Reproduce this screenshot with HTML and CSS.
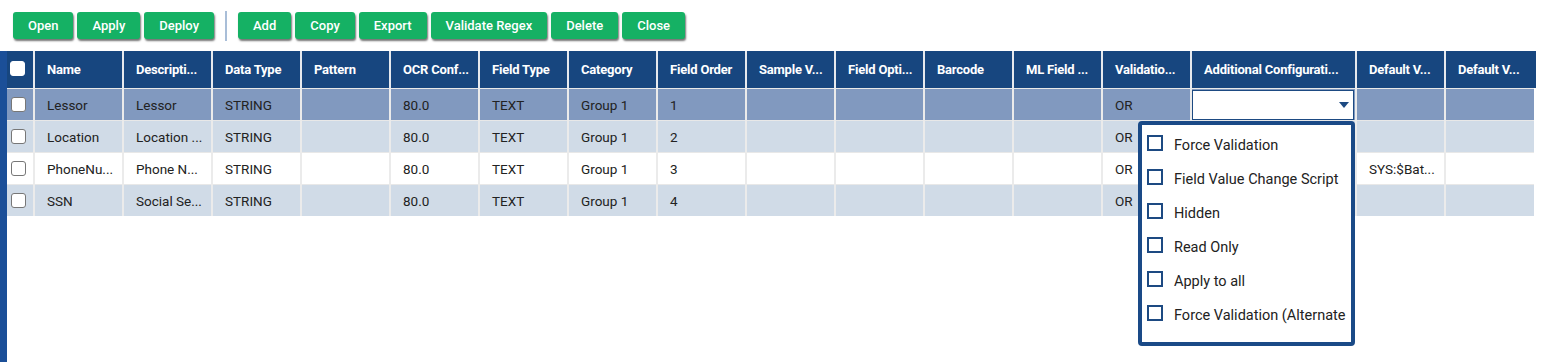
FILE: index.html
```html
<!DOCTYPE html>
<html lang="en">
<head>
    <meta charset="utf-8">
    <title>Index Fields</title>
    <link rel="stylesheet" href="styles.css">
</head>
<body>

<div class="toolbar">
    <button class="btn">Open</button>
    <button class="btn">Apply</button>
    <button class="btn">Deploy</button>
    <span class="sep"></span>
    <button class="btn">Add</button>
    <button class="btn">Copy</button>
    <button class="btn">Export</button>
    <button class="btn">Validate Regex</button>
    <button class="btn">Delete</button>
    <button class="btn">Close</button>
</div>

<div class="grid-wrap">
    <table class="grid">
        <colgroup>
            <col class="c-chk">
            <col class="c-std"><col class="c-std"><col class="c-std"><col class="c-std">
            <col class="c-std"><col class="c-std"><col class="c-std"><col class="c-std">
            <col class="c-std"><col class="c-std"><col class="c-std"><col class="c-std">
            <col class="c-std">
            <col class="c-wide">
            <col class="c-std"><col class="c-std">
        </colgroup>
        <thead>
            <tr>
                <th><span class="chk head"></span></th>
                <th>Name</th>
                <th>Descripti...</th>
                <th>Data Type</th>
                <th>Pattern</th>
                <th>OCR Conf...</th>
                <th>Field Type</th>
                <th>Category</th>
                <th>Field Order</th>
                <th>Sample V...</th>
                <th>Field Opti...</th>
                <th>Barcode</th>
                <th>ML Field ...</th>
                <th>Validatio...</th>
                <th>Additional Configurati...</th>
                <th>Default V...</th>
                <th>Default V...</th>
            </tr>
        </thead>
        <tbody>
            <tr class="selected">
                <td><span class="chk"></span></td>
                <td>Lessor</td>
                <td>Lessor</td>
                <td>STRING</td>
                <td></td>
                <td>80.0</td>
                <td>TEXT</td>
                <td>Group 1</td>
                <td>1</td>
                <td></td><td></td><td></td><td></td>
                <td>OR</td>
                <td class="edit">
                    <div class="select">
                        <span class="caret"></span>
                    </div>
                </td>
                <td></td><td></td>
            </tr>
            <tr class="alt">
                <td><span class="chk"></span></td>
                <td>Location</td>
                <td>Location ...</td>
                <td>STRING</td>
                <td></td>
                <td>80.0</td>
                <td>TEXT</td>
                <td>Group 1</td>
                <td>2</td>
                <td></td><td></td><td></td><td></td>
                <td>OR</td>
                <td></td><td></td><td></td>
            </tr>
            <tr>
                <td><span class="chk"></span></td>
                <td>PhoneNu...</td>
                <td>Phone N...</td>
                <td>STRING</td>
                <td></td>
                <td>80.0</td>
                <td>TEXT</td>
                <td>Group 1</td>
                <td>3</td>
                <td></td><td></td><td></td><td></td>
                <td>OR</td>
                <td></td>
                <td>SYS:$Bat...</td>
                <td></td>
            </tr>
            <tr class="alt">
                <td><span class="chk"></span></td>
                <td>SSN</td>
                <td>Social Se...</td>
                <td>STRING</td>
                <td></td>
                <td>80.0</td>
                <td>TEXT</td>
                <td>Group 1</td>
                <td>4</td>
                <td></td><td></td><td></td><td></td>
                <td>OR</td>
                <td></td><td></td><td></td>
            </tr>
        </tbody>
    </table>
    <span class="edge"></span>

    <div class="dropdown">
        <label class="opt"><span class="box"></span>Force Validation</label>
        <label class="opt"><span class="box"></span>Field Value Change Script</label>
        <label class="opt"><span class="box"></span>Hidden</label>
        <label class="opt"><span class="box"></span>Read Only</label>
        <label class="opt"><span class="box"></span>Apply to all</label>
        <label class="opt"><span class="box"></span>Force Validation (Alternate</label>
    </div>
</div>

</body>
</html>
```

FILE: styles.css
```css
body {
    margin: 0;
    font-family: Roboto, Arial, sans-serif;
    background-color: #fff;
    color: #222;
    height: 362px;
    overflow: hidden;
}
.toolbar {
    height: 51px;
    display: flex;
    align-items: center;
    gap: 4px;
    padding-left: 13px;
    box-sizing: border-box;
}
.btn {
    height: 27px;
    padding: 0 15px;
    background-color: #15b164;
    color: #fff;
    border: none;
    border-radius: 3px;
    font-family: Roboto, Arial, sans-serif;
    font-size: 13px;
    font-weight: 500;
    box-shadow: 1px 2px 2px rgba(0, 0, 0, 0.55);
    cursor: pointer;
}
.sep {
    width: 2px;
    height: 30px;
    background-color: #a9bed8;
    margin: 0 7px 0 7px;
}
.grid-wrap {
    position: relative;
    border-left: 7px solid #1b4f98;
    height: 311px;
}
.grid {
    border-collapse: collapse;
    table-layout: fixed;
    width: 1527px;
    font-size: 13.5px;
}
.c-chk { width: 27px; }
.c-std { width: 89px; }
.c-wide { width: 165px; }
.grid th {
    background-color: #17467f;
    color: #fff;
    font-weight: 700;
    font-size: 13px;
    text-align: left;
    height: 37px;
    padding: 0 0 0 12px;
    border-left: 2px solid #e6e9ee;
    white-space: nowrap;
    overflow: hidden;
    letter-spacing: -0.2px;
}
.grid th:first-child {
    border-left: none;
    padding-left: 3px;
}
.grid td {
    height: 31px;
    padding: 0 0 0 12px;
    border-left: 2px solid #ebebeb;
    border-top: 1px solid #e8e8e8;
    white-space: nowrap;
    overflow: hidden;
    color: #222;
}
.grid td:first-child {
    border-left: none;
    padding-left: 4px;
}
.grid tbody tr.selected td {
    background-color: #8199bf;
}
.grid tbody tr.alt td {
    background-color: #d0dbe7;
}
.chk {
    display: block;
    width: 13px;
    height: 13px;
    background-color: #fff;
    border: 1px solid #777;
    border-radius: 3px;
}
.chk.head {
    border-color: #fff;
    margin-top: -2px;
}
.grid td.edit {
    padding: 0;
}
.select {
    position: relative;
    height: 28px;
    margin: 0 1px 0 0;
    background-color: #fff;
    border: 1px solid #1d4a82;
}
.caret {
    position: absolute;
    right: 4px;
    top: 11px;
    border-left: 5px solid transparent;
    border-right: 5px solid transparent;
    border-top: 6px solid #1d4a82;
}
.edge {
    position: absolute;
    left: 1527px;
    top: 0;
    width: 2px;
    height: 37px;
    background-color: #17467f;
}
.dropdown {
    position: absolute;
    left: 1131px;
    top: 70px;
    width: 209px;
    height: 214px;
    background-color: #fff;
    border: 4px solid #1a4a87;
    border-radius: 4px;
    padding-top: 3px;
    box-sizing: content-box;
    overflow: hidden;
}
.opt {
    display: flex;
    align-items: center;
    height: 34px;
    padding-left: 5px;
    font-size: 14.5px;
    color: #222;
    white-space: nowrap;
}
.box {
    width: 12px;
    height: 12px;
    border: 2px solid #1d4a82;
    margin-right: 11px;
    margin-top: -4px;
    flex-shrink: 0;
}
```
